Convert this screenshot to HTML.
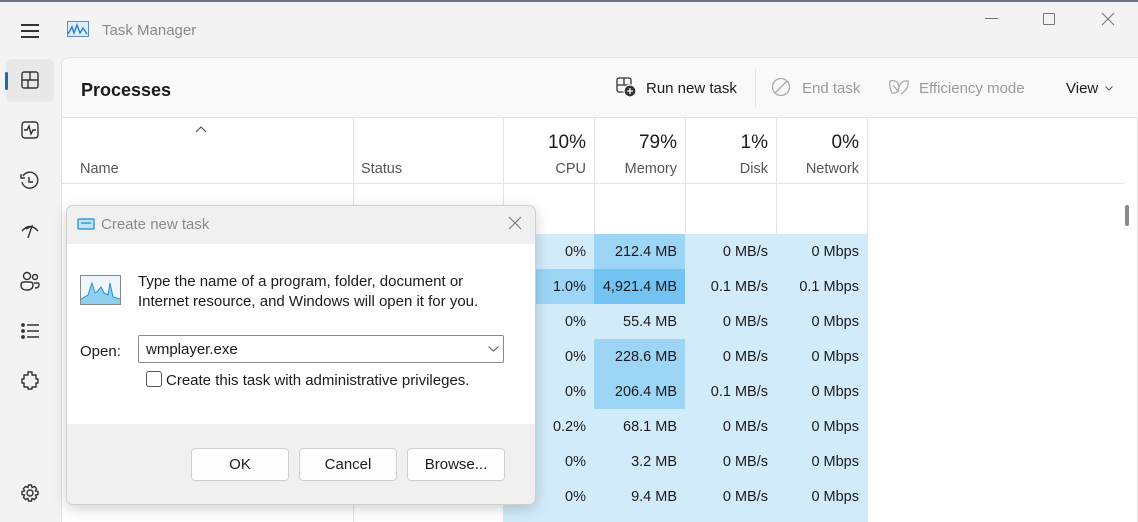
<!DOCTYPE html>
<html><head><style>
*{margin:0;padding:0;box-sizing:border-box}
html{width:1138px;height:522px;overflow:hidden}
body{width:1138px;height:522px;overflow:hidden;background:#f3f3f3;font-family:"Liberation Sans",sans-serif;position:relative;color:#1b1b1b}
.a{position:absolute}
.t{font-size:15px;white-space:nowrap}
.sep{position:absolute;width:1px;background:#e5e5e5}
.cell{position:absolute;height:35px;font-size:14.5px;text-align:right;padding-right:8px;line-height:36px;color:#1b1b1b}
.btn{position:absolute;top:448px;width:98px;height:33px;border:1px solid #d0d0d0;border-radius:4px;background:#fdfdfd;font-size:15px;text-align:center;line-height:32px}
</style></head><body>
<div class="a" style="left:0;top:0;width:1138px;height:2px;background:#6b7280"></div>
<div class="a" style="left:21px;top:24px;width:18px;height:2px;background:#333"></div>
<div class="a" style="left:21px;top:30px;width:18px;height:2px;background:#333"></div>
<div class="a" style="left:21px;top:36px;width:18px;height:2px;background:#333"></div>
<svg class="a" style="left:67px;top:21px" width="22" height="16"><rect x="0.5" y="0.5" width="21" height="15" fill="#dbeefa" stroke="#5a8fc0"/><path d="M1 13 L5 6 L7 12 L10 4 L13 12 L16 7 L20 13" stroke="#2a7fc8" fill="none" stroke-width="1.4"/></svg>
<div class="a t" style="left:102px;top:22px;color:#8a8a8a">Task Manager</div>
<div class="a" style="left:985px;top:18px;width:13px;height:1px;background:#777"></div>
<div class="a" style="left:1043px;top:13px;width:12px;height:12px;border:1px solid #777;border-radius:1px"></div>
<svg class="a" style="left:1101px;top:12px" width="14" height="14"><path d="M1 1L13 13M13 1L1 13" stroke="#777" stroke-width="1.1"/></svg>
<div class="a" style="left:6px;top:59px;width:48px;height:43px;background:#e8e8e8;border-radius:6px"></div>
<div class="a" style="left:5px;top:72px;width:3px;height:18px;background:#1d6aa5;border-radius:2px"></div>
<svg class="a" style="left:20px;top:70px" width="20" height="20" fill="none" stroke="#333" stroke-width="1.4"><rect x="2" y="2" width="16" height="16" rx="2" fill="none"/><path d="M2 10H18M10 2V10M8 10V18" /></svg>
<svg class="a" style="left:20px;top:120px" width="20" height="20" fill="none" stroke="#333" stroke-width="1.4"><rect x="2" y="2" width="16" height="16" rx="3"/><path d="M4 10H7L9 6L11 14L13 10H16"/></svg>
<svg class="a" style="left:19px;top:170px" width="22" height="22" fill="none" stroke="#333" stroke-width="1.4"><path d="M4 6A8 8 0 1 1 3 12"/><path d="M2 4V8H6M10 7V12H14"/></svg>
<svg class="a" style="left:19px;top:220px" width="22" height="22" fill="none" stroke="#333" stroke-width="1.4"><path d="M3 11Q11 2 19 11M7 9L13 6L9 18M16 8L18 10"/></svg>
<svg class="a" style="left:19px;top:270px" width="22" height="22" fill="none" stroke="#333" stroke-width="1.4"><circle cx="8" cy="6" r="3.5"/><circle cx="16" cy="7" r="2.5"/><path d="M2 15Q2 12 5 12H11Q14 12 14 15Q14 20 8 20Q2 20 2 15Z"/><path d="M15 13H19Q20 13 20 15Q20 18 16 18"/></svg>
<svg class="a" style="left:19px;top:320px" width="22" height="22" fill="#333" stroke="#333" stroke-width="1.4"><circle cx="4" cy="5" r="1.2"/><circle cx="4" cy="11" r="1.2"/><circle cx="4" cy="17" r="1.2"/><path d="M8 5H20M8 11H20M8 17H20" fill="none"/></svg>
<svg class="a" style="left:19px;top:369px" width="22" height="22" fill="none" stroke="#333" stroke-width="1.4"><path d="M9 3H13V6H17V10H19V14H17V18H13V20H9V18H5V14H3V10H5V6H9Z" stroke-linejoin="round"/></svg>
<svg class="a" style="left:20px;top:483px" width="20" height="20" fill="none" stroke="#333" stroke-width="1.4"><circle cx="10" cy="10" r="3"/><path d="M8.5 2H11.5L12 4.5L14.5 3.5L16.5 5.5L15.5 8L18 8.5V11.5L15.5 12L16.5 14.5L14.5 16.5L12 15.5L11.5 18H8.5L8 15.5L5.5 16.5L3.5 14.5L4.5 12L2 11.5V8.5L4.5 8L3.5 5.5L5.5 3.5L8 4.5Z"/></svg>
<div class="a" style="left:61px;top:57px;width:1077px;height:465px;background:#fff;border:1px solid #e3e3e3;border-bottom:none;border-radius:8px 0 0 0"></div>
<div class="a" style="left:62px;top:58px;width:1076px;height:60px;background:#f9f9f9;border-radius:8px 0 0 0;border-bottom:1px solid #e5e5e5"></div>
<div class="a" style="left:81px;top:80px;font-size:18px;font-weight:bold;color:#1b1b1b">Processes</div>
<svg class="a" style="left:616px;top:77px" width="22" height="22" fill="none" stroke="#333" stroke-width="1.3"><rect x="1" y="1" width="14" height="14" rx="2"/><path d="M1 8H15M8 1V8"/><circle cx="14" cy="14" r="6" fill="#333" stroke="#f9f9f9"/><path d="M14 11V17M11 14H17" stroke="#fff"/></svg>
<div class="a t" style="left:646px;top:80px">Run new task</div>
<div class="a" style="left:755px;top:68px;width:1px;height:40px;background:#e5e5e5"></div>
<svg class="a" style="left:771px;top:77px" width="20" height="20" fill="none" stroke="#aaa" stroke-width="1.3"><circle cx="10" cy="10" r="8.5"/><path d="M4 16L16 4"/></svg>
<div class="a t" style="left:802px;top:80px;color:#9a9a9a">End task</div>
<svg class="a" style="left:888px;top:77px" width="22" height="20" fill="none" stroke="#aaa" stroke-width="1.3"><path d="M2 4Q10 2 11 10Q10 17 4 16Q1 10 2 4ZM11 10Q13 3 20 4Q21 12 13 17M5 8L11 15"/></svg>
<div class="a t" style="left:919px;top:80px;color:#9a9a9a">Efficiency mode</div>
<div class="a t" style="left:1066px;top:80px">View</div>
<svg class="a" style="left:1105px;top:86px" width="8" height="5"><path d="M0.5 0.5L4 4L7.5 0.5" stroke="#555" fill="none"/></svg>
<svg class="a" style="left:195px;top:126px" width="12" height="7"><path d="M1 6L6 1L11 6" stroke="#555" fill="none" stroke-width="1.2"/></svg>
<div class="a t" style="left:80px;top:161px;color:#555;font-size:14.5px">Name</div>
<div class="a t" style="left:361px;top:161px;color:#555;font-size:14.5px">Status</div>
<div class="a" style="left:62px;top:183px;width:1063px;height:1px;background:#e5e5e5"></div>
<div class="sep" style="left:353px;top:118px;height:404px"></div>
<div class="sep" style="left:503px;top:118px;height:404px"></div>
<div class="sep" style="left:594px;top:118px;height:404px"></div>
<div class="sep" style="left:685px;top:118px;height:404px"></div>
<div class="sep" style="left:776px;top:118px;height:404px"></div>
<div class="sep" style="left:867px;top:118px;height:404px"></div>
<div class="a" style="left:503px;top:132px;width:91px;text-align:right;padding-right:8px;font-size:19px">10%</div>
<div class="a" style="left:594px;top:132px;width:91px;text-align:right;padding-right:8px;font-size:19px">79%</div>
<div class="a" style="left:685px;top:132px;width:91px;text-align:right;padding-right:8px;font-size:19px">1%</div>
<div class="a" style="left:776px;top:132px;width:91px;text-align:right;padding-right:8px;font-size:19px">0%</div>
<div class="a" style="left:503px;top:161px;width:91px;text-align:right;padding-right:8px;font-size:14.5px;color:#555">CPU</div>
<div class="a" style="left:594px;top:161px;width:91px;text-align:right;padding-right:8px;font-size:14.5px;color:#555">Memory</div>
<div class="a" style="left:685px;top:161px;width:91px;text-align:right;padding-right:8px;font-size:14.5px;color:#555">Disk</div>
<div class="a" style="left:776px;top:161px;width:91px;text-align:right;padding-right:8px;font-size:14.5px;color:#555">Network</div>
<div class="a" style="left:1125px;top:205px;width:4px;height:21px;background:#8a8a8a;border-radius:2px"></div>
<div id="rows"></div>
<script>
var d=[["0%","212.4 MB","0 MB/s","0 Mbps",0,1],["1.0%","4,921.4 MB","0.1 MB/s","0.1 Mbps",1,2],["0%","55.4 MB","0 MB/s","0 Mbps",0,0],["0%","228.6 MB","0 MB/s","0 Mbps",0,1],["0%","206.4 MB","0.1 MB/s","0 Mbps",0,1],["0.2%","68.1 MB","0 MB/s","0 Mbps",0,0],["0%","3.2 MB","0 MB/s","0 Mbps",0,0],["0%","9.4 MB","0 MB/s","0 Mbps",0,0]];
var c=["#d2ebfa","#9cd5f6","#72c3f2"],h="";
d.forEach(function(r,i){var y=234+i*35;var hh=(i==7)?'height:35px;':'';
h+='<div class="cell" style="left:503px;top:'+y+'px;width:91px;background:'+c[r[4]]+'">'+r[0]+'</div>';
h+='<div class="cell" style="left:594px;top:'+y+'px;width:91px;background:'+c[r[5]]+'">'+r[1]+'</div>';
h+='<div class="cell" style="left:685px;top:'+y+'px;width:91px;background:'+c[0]+'">'+r[2]+'</div>';
h+='<div class="cell" style="left:776px;top:'+y+'px;width:91px;background:'+c[0]+'">'+r[3]+'</div>';});
h+='<div class="a" style="left:503px;top:514px;width:364px;height:8px;background:'+c[0]+'"></div>';
document.getElementById("rows").innerHTML=h;
</script>
<div class="a" style="left:66px;top:205px;width:470px;height:300px;background:#f0f0f0;border:1px solid #cfcfcf;border-radius:7px;box-shadow:0 4px 14px rgba(0,0,0,.18);overflow:hidden">
 <div class="a" style="left:0;top:38px;width:470px;height:180px;background:#fff"></div>
</div>
<svg class="a" style="left:77px;top:218px" width="18" height="12"><rect x="1" y="1" width="16" height="10" rx="1" fill="#bfe3f5" stroke="#3a9ad0" stroke-width="1.5"/><path d="M4 5H14" stroke="#3a9ad0" stroke-width="1.5"/></svg>
<div class="a t" style="left:101px;top:216px;color:#8a8a8a">Create new task</div>
<svg class="a" style="left:508px;top:216px" width="14" height="14"><path d="M1 1L13 13M13 1L1 13" stroke="#777" stroke-width="1.1"/></svg>
<svg class="a" style="left:80px;top:275px" width="41" height="30"><rect x="0.5" y="0.5" width="40" height="29" fill="#eef6fb" stroke="#888"/><path d="M1 24L8 20L12 8L15 18L18 16L21 12L24 18L28 20L30 8L33 22L40 24V29H1Z" fill="#8fd0f0"/><path d="M1 24L8 20L12 8L15 18L18 16L21 12L24 18L28 20L30 8L33 22L40 24" fill="none" stroke="#2a8fd0"/></svg>
<div class="a t" style="left:138px;top:272px;line-height:20px">Type the name of a program, folder, document or<br>Internet resource, and Windows will open it for you.</div>
<div class="a t" style="left:80px;top:343px">Open:</div>
<div class="a" style="left:138px;top:335px;width:366px;height:28px;border:1px solid #8a8a8a;border-radius:2px;background:#fff"></div>
<div class="a t" style="left:146px;top:341px">wmplayer.exe</div>
<svg class="a" style="left:488px;top:346px" width="11" height="6"><path d="M0.5 0.5L5.5 5L10.5 0.5" stroke="#555" fill="none"/></svg>
<div class="a" style="left:146px;top:371px;width:16px;height:16px;border:1px solid #555;border-radius:3px;background:#fff"></div>
<div class="a t" style="left:166px;top:372px">Create this task with administrative privileges.</div>
<div class="btn" style="left:191px">OK</div>
<div class="btn" style="left:299px">Cancel</div>
<div class="btn" style="left:407px">Browse...</div>
</body></html>
